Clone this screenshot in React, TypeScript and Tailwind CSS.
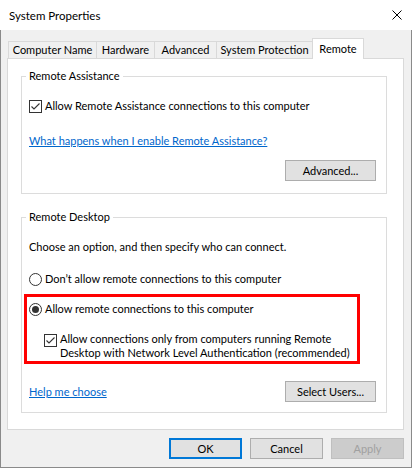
import React from "react";

const Check = () => (
  <span className="w-[13px] h-[13px] border border-[#333333] bg-white flex items-center justify-center shrink-0">
    <svg width="11" height="11" viewBox="0 0 11 11">
      <polyline points="1.5,5.5 4,8 9.5,2.5" fill="none" stroke="#333333" strokeWidth="1.1" />
    </svg>
  </span>
);

const Radio = ({ on }: { on?: boolean }) => (
  <span className="w-[13px] h-[13px] rounded-full border border-[#333333] bg-white flex items-center justify-center shrink-0">
    {on && <span className="w-[7px] h-[7px] rounded-full bg-[#333333]" />}
  </span>
);

const Btn = ({ children, cls }: { children: React.ReactNode; cls?: string }) => (
  <div className={"h-[21px] flex items-center justify-center " + (cls ?? "")}>{children}</div>
);

export default function App() {
  return (
    <div className="w-[412px] h-[468px] bg-[#f0f0f0] flex flex-col text-[11px] leading-[14px] text-black whitespace-nowrap font-['Lato',Arial,sans-serif]">
      <div className="h-[30px] bg-white flex items-center pl-[9px] shrink-0">
        <span className="mt-[1px] text-[11.5px]">System Properties</span>
        <svg className="ml-auto mr-[10px]" width="10" height="10" viewBox="0 0 10 10">
          <path d="M0.5 0.5 L9.5 9.5 M9.5 0.5 L0.5 9.5" stroke="#000" strokeWidth="1" />
        </svg>
      </div>
      <div className="flex-1 flex flex-col border-x border-b border-[#8a8a8a] pl-[6px] pr-[7px] pt-[8px]">
        <div className="flex items-end h-[20px] ml-[1px]">
          <div className="w-[88px] h-[17px] border-l border-t border-[#d9d9d9] flex items-center justify-center">Computer Name</div>
          <div className="w-[58px] h-[17px] border-l border-t border-[#d9d9d9] flex items-center justify-center">Hardware</div>
          <div className="w-[62px] h-[17px] border-l border-t border-[#d9d9d9] flex items-center justify-center">Advanced</div>
          <div className="w-[96px] h-[17px] border-l border-t border-[#d9d9d9] flex items-center justify-center">System Protection</div>
          <div className="relative z-10 w-[52px] h-[21px] -mb-px bg-white border-l border-t border-r border-[#d9d9d9] flex items-center justify-center pb-[1px]">Remote</div>
        </div>
        <div className="h-[372px] bg-white border border-[#d9d9d9] pt-[10px] pl-[13px]">
          <fieldset className="w-[366px] border border-[#dcdcdc] px-[7px] pb-[12px]">
            <legend className="ml-[-3px] px-[3px]">Remote Assistance</legend>
            <div className="flex items-center gap-[3px] mt-[16px]">
              <Check />
              <span>Allow Remote Assistance connections to this computer</span>
            </div>
            <div className="mt-[21px]">
              <span className="text-[#0066cc] underline">What happens when I enable Remote Assistance?</span>
            </div>
            <div className="flex justify-end mt-[12px] pr-[3px]">
              <Btn cls="w-[91px] bg-[#e1e1e1] border border-[#adadad]">Advanced...</Btn>
            </div>
          </fieldset>
          <fieldset className="w-[366px] border border-[#dcdcdc] mt-[16px] pb-[10px]">
            <legend className="ml-[4px] px-[3px]">Remote Desktop</legend>
            <div className="mt-[16px] pl-[7px]">Choose an option, and then specify who can connect.</div>
            <div className="flex items-center gap-[3px] mt-[18px] pl-[7px]">
              <Radio />
              <span>Don’t allow remote connections to this computer</span>
            </div>
            <div className="ml-[2px] mt-[8px] w-[336px] border-[3px] border-[#ff0000] pl-[2px] pt-[5px] pb-[1px]">
              <div className="flex items-center gap-[3px]">
                <Radio on />
                <span>Allow remote connections to this computer</span>
              </div>
              <div className="flex items-start gap-[3px] mt-[16px] pl-[15px]">
                <span className="mt-[2px]"><Check /></span>
                <span>
                  Allow connections only from computers running Remote
                  <br />
                  Desktop with Network Level Authentication (recommended)
                </span>
              </div>
            </div>
            <div className="flex items-center justify-between mt-[17px] pl-[7px] pr-[10px]">
              <span className="text-[#0066cc] underline">Help me choose</span>
              <Btn cls="w-[91px] bg-[#e1e1e1] border border-[#adadad]">Select Users...</Btn>
            </div>
          </fieldset>
        </div>
        <div className="flex justify-end gap-[8px] mt-[8px]">
          <Btn cls="w-[73px] bg-[#e1e1e1] border-2 border-[#0078d7]">OK</Btn>
          <Btn cls="w-[73px] bg-[#e1e1e1] border border-[#adadad]">Cancel</Btn>
          <Btn cls="w-[73px] bg-[#cccccc] border border-[#bfbfbf] text-[#a0a0a0]">Apply</Btn>
        </div>
      </div>
    </div>
  );
}
